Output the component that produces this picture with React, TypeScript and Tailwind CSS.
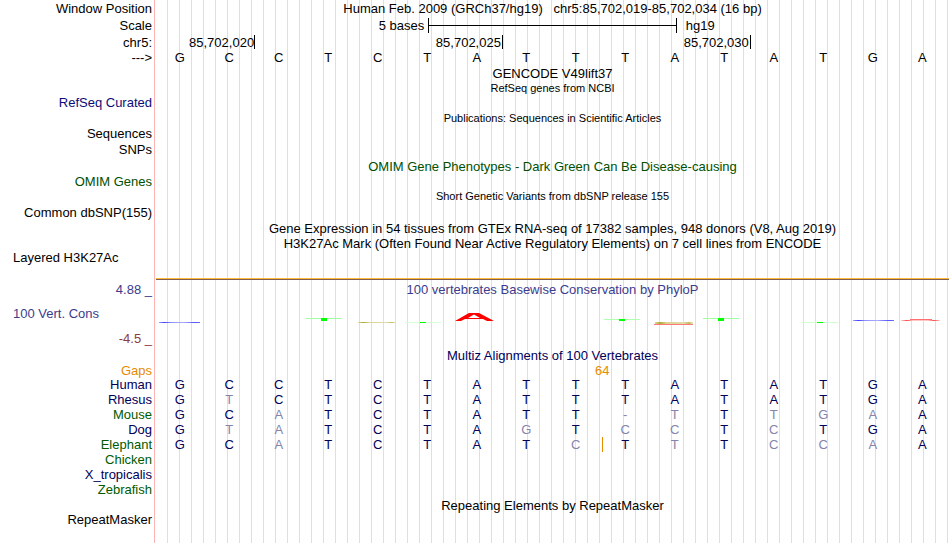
import type { ReactNode } from "react";
import clsx from "clsx";

const REFERENCE = "GCCTCTATTTATATGA";

interface Species {
  name: string;
  color: string;
  bases: string;
  gapBefore?: number;
}

const SPECIES: Species[] = [
  { name: "Human", color: "text-[#00005a]", bases: "GCCTCTATTTATATGA" },
  { name: "Rhesus", color: "text-[#00005a]", bases: "GTCTCTATTTATATGA" },
  { name: "Mouse", color: "text-[#005a00]", bases: "GCATCTATT-TTTGAA" },
  { name: "Dog", color: "text-[#00005a]", bases: "GTATCTAGTCCTCTGA" },
  { name: "Elephant", color: "text-[#005a00]", bases: "GCATCTATCTTTCCAA", gapBefore: 9 },
  { name: "Chicken", color: "text-[#005a00]", bases: "" },
  { name: "X_tropicalis", color: "text-[#00005a]", bases: "" },
  { name: "Zebrafish", color: "text-[#005a00]", bases: "" },
];

interface RowProps {
  label?: string;
  height?: string;
  color?: string;
  align?: string;
  children?: ReactNode;
}

function Row({ label, height = "h-4", color = "text-black", align = "justify-end", children }: RowProps) {
  return (
    <div className={clsx("flex items-center", height, color)}>
      <div className={clsx("mr-[3px] flex w-[152px] shrink-0 whitespace-pre", align)}>{label}</div>
      <div className="h-full min-w-0 flex-1">{children}</div>
    </div>
  );
}

interface TitleProps {
  small?: boolean;
  children: ReactNode;
}

function Title({ small, children }: TitleProps) {
  return (
    <div className={clsx("flex h-full items-center justify-center whitespace-pre", small && "text-[11px]")}>
      {children}
    </div>
  );
}

function ScaleBar() {
  return (
    <div className="grid h-full grid-cols-[11fr_10fr_11fr] items-center">
      <span className="pr-1 text-right">5 bases</span>
      <span className="flex h-[15px] items-center border-x border-black">
        <span className="h-px w-full bg-black" />
      </span>
      <span className="pl-[9px]">hg19</span>
    </div>
  );
}

function Ruler() {
  return (
    <div className="grid h-full grid-cols-16 items-center pr-0.5 text-right leading-4">
      <span className="col-span-2 h-[14px]">85,702,020</span>
      <span className="col-span-5 h-[14px] border-l border-black pr-px">85,702,025</span>
      <span className="col-span-5 h-[14px] border-l border-black pr-px">85,702,030</span>
      <span className="col-span-4 h-[14px] border-l border-black" />
    </div>
  );
}

const T_MARKS = [
  { x: 151, y: 21, h: 3, light: "#a0ffa0" },
  { x: 250, y: 25, h: 1, light: "#d4ffd4" },
  { x: 449, y: 22, h: 2, light: "#b0ffb0" },
  { x: 548, y: 21, h: 3, light: "#a0ffa0" },
  { x: 647, y: 25, h: 1, light: "#d0ffd0" },
];

function ConservationLogo() {
  return (
    <svg
      className="block h-full w-full"
      viewBox="0 0 795 33"
      preserveAspectRatio="none"
      shapeRendering="crispEdges"
      aria-hidden="true"
    >
      <defs>
        <linearGradient id="blue">
          <stop offset="0" stopColor="#a0a0ff" />
          <stop offset="0.13" stopColor="#4040ff" />
          <stop offset="0.3" stopColor="#9090ff" />
          <stop offset="0.6" stopColor="#acacff" />
          <stop offset="0.85" stopColor="#5858ff" />
          <stop offset="1" stopColor="#6c6cff" />
        </linearGradient>
        <linearGradient id="olive">
          <stop offset="0" stopColor="#dcdc9c" />
          <stop offset="0.13" stopColor="#b0a830" />
          <stop offset="0.3" stopColor="#dcd494" />
          <stop offset="0.75" stopColor="#e0dcac" />
          <stop offset="0.9" stopColor="#c4bc60" />
          <stop offset="1" stopColor="#ececd0" />
        </linearGradient>
        <linearGradient id="red">
          <stop offset="0" stopColor="#ffd0d0" />
          <stop offset="0.15" stopColor="#ff4848" />
          <stop offset="0.3" stopColor="#ffc4c4" />
          <stop offset="0.7" stopColor="#ffc4c4" />
          <stop offset="0.85" stopColor="#ff4848" />
          <stop offset="1" stopColor="#ffd0d0" />
        </linearGradient>
      </defs>

      <rect x="4" y="25" width="41" height="1" fill="url(#blue)" />
      <rect x="203" y="25" width="38" height="1" fill="url(#olive)" />
      {T_MARKS.map((t) => (
        <g key={t.x}>
          <rect x={t.x} y={t.y} width="36" height="1" fill={t.light} />
          <rect x={t.x + 15} y={t.y} width="6" height={t.h} fill="#00ff00" />
        </g>
      ))}
      <path
        d="M300 24 L314 16 H324 L339 24 H332 L328 22 H310 L306 24 Z M313 21 H325 L319 17.5 Z"
        fill="#ff0000"
        fillRule="evenodd"
        shapeRendering="auto"
      />
      <rect x="500" y="25" width="38" height="2" fill="url(#olive)" />
      <rect x="499" y="27" width="39" height="1" fill="#ff7878" />
      <rect x="698" y="23" width="41" height="1" fill="url(#blue)" />
      <rect x="746" y="23" width="39" height="1" fill="url(#red)" />
      <rect x="755" y="22" width="22" height="1" fill="#ff7070" />
    </svg>
  );
}

function AlignmentTable() {
  return (
    <table className="w-full table-fixed border-collapse text-center">
      <tbody>
        {SPECIES.map((s) => (
          <tr key={s.name} className="h-[15px]">
            <th scope="row" className={clsx("w-[155px] p-0 pr-[3px] text-right font-normal", s.color)}>
              {s.name}
            </th>
            {Array.from(REFERENCE, (ref, i) => (
              <td
                key={i}
                className={clsx("relative p-0", s.bases[i] === ref ? "text-[#00005a]" : "text-[#8484ac]")}
              >
                {s.gapBefore === i && <span className="absolute inset-y-0 left-px w-px bg-[#e68a00]" />}
                {s.bases[i]}
              </td>
            ))}
            <td className="w-[3px] p-0" />
          </tr>
        ))}
      </tbody>
    </table>
  );
}

export default function App() {
  return (
    <main className="relative min-h-screen overflow-hidden bg-white font-['Liberation_Sans',Arial,sans-serif] text-[13px] leading-[15px] text-black">
      <div className="absolute inset-y-0 right-0 left-[154px] border-l border-[#ffb4b4] bg-[repeating-linear-gradient(to_right,transparent_0px_11px,#dcdcfa_11px_12px)] bg-clip-content bg-origin-content pl-px" />

      <div className="relative">
        <Row label="Window Position">
          <Title>{"Human Feb. 2009 (GRCh37/hg19)   chr5:85,702,019-85,702,034 (16 bp)"}</Title>
        </Row>
        <Row label="Scale" height="h-[18px]">
          <ScaleBar />
        </Row>
        <Row label="chr5:">
          <Ruler />
        </Row>
        <Row label="--->" height="h-[15px]">
          <div className="grid h-full grid-cols-16 items-center pr-[3px] text-center">
            {Array.from(REFERENCE, (base, i) => (
              <span key={i}>{base}</span>
            ))}
          </div>
        </Row>

        <Row height="h-[17px]">
          <Title>GENCODE V49lift37</Title>
        </Row>
        <Row height="h-[13px]">
          <Title small>RefSeq genes from NCBI</Title>
        </Row>
        <Row label="RefSeq Curated" height="h-[15px]" color="text-[#0c0c78]" />
        <Row height="h-[17px]">
          <Title small>Publications: Sequences in Scientific Articles</Title>
        </Row>
        <Row label="Sequences" height="h-[13px]" />
        <Row label="SNPs" height="h-[18px]" />
        <Row height="h-[17px]" color="text-[#005000]">
          <Title>OMIM Gene Phenotypes - Dark Green Can Be Disease-causing</Title>
        </Row>
        <Row label="OMIM Genes" height="h-[12px]" color="text-[#005000]" />
        <Row height="h-[18px]">
          <Title small>Short Genetic Variants from dbSNP release 155</Title>
        </Row>
        <Row label="Common dbSNP(155)" height="h-[15px]" />
        <Row height="h-[17px]">
          <Title>Gene Expression in 54 tissues from GTEx RNA-seq of 17382 samples, 948 donors (V8, Aug 2019)</Title>
        </Row>
        <Row height="h-[13px]">
          <Title>H3K27Ac Mark (Often Found Near Active Regulatory Elements) on 7 cell lines from ENCODE</Title>
        </Row>
        <Row label="Layered H3K27Ac" height="h-[15px]" align="justify-start pl-[13px]" />
        <div className="mt-[13px] mr-px mb-px ml-[156px]">
          <div className="h-px bg-[#ffb83c]" />
          <div className="h-px bg-[#806050]" />
        </div>

        <Row label="4.88 _" color="text-[#3c3c8c]">
          <Title>100 vertebrates Basewise Conservation by PhyloP</Title>
        </Row>
        <Row label="100 Vert. Cons" height="h-[33px]" color="text-[#3c3c8c]" align="justify-start pl-[13px]">
          <ConservationLogo />
        </Row>
        <Row label="-4.5 _" height="h-[17px]" color="text-[#8c3c3c]" />

        <Row color="text-[#00005a]">
          <Title>Multiz Alignments of 100 Vertebrates</Title>
        </Row>
        <Row label="Gaps" height="h-[14px]" color="text-[#e68a00]">
          <div className="grid h-full grid-cols-16 items-center text-center">
            <span className="col-span-2 col-start-9">64</span>
          </div>
        </Row>
        <AlignmentTable />

        <Row>
          <Title>Repeating Elements by RepeatMasker</Title>
        </Row>
        <Row label="RepeatMasker" height="h-[13px]" />
      </div>
    </main>
  );
}
